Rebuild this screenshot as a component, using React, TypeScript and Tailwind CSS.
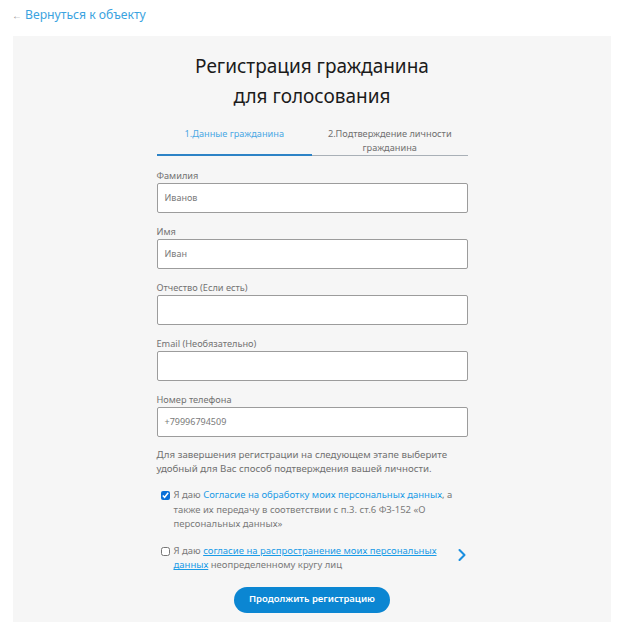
import { ChevronRight } from 'lucide-react';

const fields = [
  { label: 'Фамилия', value: 'Иванов' },
  { label: 'Имя', value: 'Иван' },
  { label: 'Отчество (Если есть)', value: '' },
  { label: 'Email (Необязательно)', value: '' },
  { label: 'Номер телефона', value: '+79996794509' },
];

export default function App() {
  return (
    <div className="w-[628px] h-[622px] overflow-hidden bg-white font-['Noto_Sans',sans-serif]">
      {/* Back link */}
      <div className="h-[36px] pl-[12px] pt-[6px]">
        <a href="#" className="flex items-center gap-[3px] text-[12.2px] leading-[18px] text-[#3ba3e0]">
          <span className="text-[10px] text-[#9a9a9a]">←</span>
          Вернуться к объекту
        </a>
      </div>

      {/* Panel */}
      <div className="mx-[13px] w-[598px] h-[600px] bg-[#f6f6f6] pt-[15px]">
        <h1 className="text-center text-[19px] leading-[30px] font-normal text-[#1b1b1b]">
          Регистрация гражданина
          <br />
          для голосования
        </h1>

        <div className="mx-auto w-[311px]">
          {/* Tabs */}
          <div className="mt-[16px] flex text-[9.2px] leading-[14px]">
            <div className="flex-1 border-b-2 border-[#2d83c6] text-center text-[#4aa8e4]">
              1.Данные гражданина
            </div>
            <div className="flex-1 border-b border-[#a9b0b7] text-center text-[#707070]">
              2.Подтверждение личности
              <br />
              гражданина
            </div>
          </div>

          {/* Fields */}
          <div className="mt-[13px] flex flex-col gap-[12px]">
            {fields.map((f) => (
              <div key={f.label}>
                <div className="text-[9.2px] leading-[14px] text-[#727272]">{f.label}</div>
                <div className="h-[30px] flex items-center rounded-[2px] border border-[#9c9c9c] bg-white px-[7px] text-[9px] text-[#7a7a7a]">
                  {f.value}
                </div>
              </div>
            ))}
          </div>

          <p className="mt-[11px] whitespace-nowrap text-[9.7px] leading-[14px] text-[#707070]">
            Для завершения регистрации на следующем этапе выберите
            <br />
            удобный для Вас способ подтверждения вашей личности.
          </p>

          {/* Consent 1 */}
          <div className="mt-[12px] flex items-start pl-[4px]">
            <input
              type="checkbox"
              defaultChecked
              className="mt-[3px] h-[9px] w-[9px] shrink-0 accent-[#0a6fd8]"
            />
            <p className="ml-[4px] whitespace-nowrap text-[9.5px] leading-[14.5px] text-[#7a7a7a]">
              Я даю <a href="#" className="text-[#1a9be6]">Согласие на обработку моих персональных данных</a>, а
              <br />
              также их передачу в соответствии с п.3. ст.6 ФЗ-152 «О
              <br />
              персональных данных»
            </p>
          </div>

          {/* Consent 2 */}
          <div className="mt-[12px] flex items-start pl-[4px]">
            <input type="checkbox" className="mt-[3px] h-[9px] w-[9px] shrink-0" />
            <p className="ml-[4px] whitespace-nowrap text-[9.5px] leading-[14.5px] text-[#7a7a7a]">
              Я даю{' '}
              <a href="#" className="text-[#1a9be6] underline">
                согласие на распространение моих персональных
                <br />
                данных
              </a>{' '}
              неопределенному кругу лиц
            </p>
            <ChevronRight className="ml-auto -mr-[4px] mt-[1px] h-[20px] w-[20px] shrink-0 text-[#1a8fe0]" strokeWidth={2.5} />
          </div>

          <div className="mt-[14px] flex justify-center">
            <button className="h-[26px] w-[156px] rounded-full bg-[#0b86d2] text-[9.5px] font-semibold text-white">
              Продолжить регистрацию
            </button>
          </div>
        </div>
      </div>
    </div>
  );
}
